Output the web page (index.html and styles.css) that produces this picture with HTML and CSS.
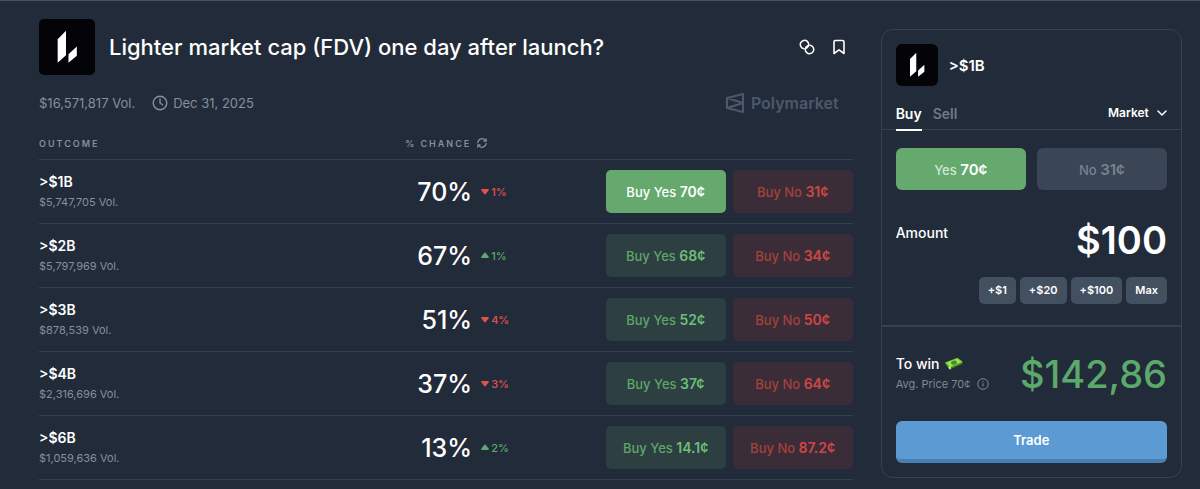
FILE: index.html
```html
<!DOCTYPE html>
<html lang="en">
<head>
  <meta charset="UTF-8">
  <meta name="viewport" content="width=device-width, initial-scale=1.0">
  <title>Lighter market cap (FDV) one day after launch?</title>
  <link rel="stylesheet" href="styles.css">
</head>
<body>
  <!-- shared icons -->
  <svg class="sprite" aria-hidden="true">
    <symbol id="lighter" viewBox="0 0 57 57">
      <path d="M19 20.500 27.500 12v25L19 44.500zM30 36l8.500-8v9.500L30 44.500z" fill="#fff"/>
    </symbol>
    <symbol id="up" viewBox="0 0 8 7">
      <path d="M3.200.9Q4 0 4.800.9L7.600 4.500Q8.300 6 7 6H1Q-.3 6 .4 4.500z" fill="currentColor"/>
    </symbol>
    <symbol id="down" viewBox="0 0 8 7">
      <path d="M3.200 6.100Q4 7 4.800 6.100L7.600 2.500Q8.300 1 7 1H1Q-.3 1 .4 2.500z" fill="currentColor"/>
    </symbol>
  </svg>

  <div class="page">
    <main class="market">
      <header class="market-header">
        <svg class="market-logo" role="img" aria-label="Lighter"><use href="#lighter"/></svg>
        <h1>Lighter market cap (FDV) one day after launch?</h1>
        <button class="icon-button" aria-label="Copy link">
          <svg width="16" height="16" viewBox="0 0 16 16" fill="none" stroke="currentColor" stroke-width="1.500" stroke-linecap="round">
            <path d="M5.060 9.680A4.200 4.200 0 1 1 7.600 9.140"/>
            <path d="M10.940 6.320A4.200 4.200 0 1 1 8.400 6.860"/>
          </svg>
        </button>
        <button class="icon-button" aria-label="Bookmark">
          <svg width="16" height="16" viewBox="0 0 16 16" fill="none" stroke="currentColor" stroke-width="1.600" stroke-linejoin="round">
            <path d="M3 3a1.500 1.500 0 0 1 1.500-1.500h7A1.500 1.500 0 0 1 13 3v11.500l-5-3.700-5 3.700z"/>
          </svg>
        </button>
      </header>

      <div class="market-meta">
        <span>$16,571,817 Vol.</span>
        <svg width="16" height="16" viewBox="0 0 16 16" fill="none" stroke="currentColor" stroke-width="1.400" stroke-linecap="round">
          <circle cx="8" cy="8" r="6.800"/>
          <path d="M8 4v4l2.500 1.800"/>
        </svg>
        <span>Dec 31, 2025</span>
        <span class="brand">
          <svg width="18" height="20" viewBox="0 0 18 20" fill="none" stroke="currentColor" stroke-width="2" stroke-linejoin="round">
            <path d="M1 5 17 1v18L1 15zM1 5l16 5-16 5"/>
          </svg>
          Polymarket
        </span>
      </div>

      <table class="outcomes">
        <thead>
          <tr>
            <th class="col-outcome">Outcome</th>
            <th class="col-chance">
              <span class="chance-title">% Chance
                <button class="refresh" aria-label="Refresh">
                  <svg width="10" height="10" viewBox="0 0 10 10" fill="none" stroke="currentColor" stroke-width="1.200" stroke-linecap="round" stroke-linejoin="round">
                    <path d="M.8 4.700A4.200 4.200 0 0 1 8.600 2.800M9.200.8v2.400H6.800M9.200 5.300A4.200 4.200 0 0 1 1.400 7.200M.8 9.200V6.800h2.400"/>
                  </svg>
                </button>
              </span>
            </th>
            <th></th>
          </tr>
        </thead>
        <tbody>
          <tr>
            <td><div class="name">&gt;$1B</div><div class="volume">$5,747,705 Vol.</div></td>
            <td><div class="chance"><span class="percent">70%</span><span class="change down"><svg><use href="#down"/></svg>1%</span></div></td>
            <td><div class="actions">
              <button class="buy yes selected">Buy Yes <b>70¢</b></button>
              <button class="buy no">Buy No <b>31¢</b></button>
            </div></td>
          </tr>
          <tr>
            <td><div class="name">&gt;$2B</div><div class="volume">$5,797,969 Vol.</div></td>
            <td><div class="chance"><span class="percent">67%</span><span class="change up"><svg><use href="#up"/></svg>1%</span></div></td>
            <td><div class="actions">
              <button class="buy yes">Buy Yes <b>68¢</b></button>
              <button class="buy no">Buy No <b>34¢</b></button>
            </div></td>
          </tr>
          <tr>
            <td><div class="name">&gt;$3B</div><div class="volume">$878,539 Vol.</div></td>
            <td><div class="chance"><span class="percent">51%</span><span class="change down"><svg><use href="#down"/></svg>4%</span></div></td>
            <td><div class="actions">
              <button class="buy yes">Buy Yes <b>52¢</b></button>
              <button class="buy no">Buy No <b>50¢</b></button>
            </div></td>
          </tr>
          <tr>
            <td><div class="name">&gt;$4B</div><div class="volume">$2,316,696 Vol.</div></td>
            <td><div class="chance"><span class="percent">37%</span><span class="change down"><svg><use href="#down"/></svg>3%</span></div></td>
            <td><div class="actions">
              <button class="buy yes">Buy Yes <b>37¢</b></button>
              <button class="buy no">Buy No <b>64¢</b></button>
            </div></td>
          </tr>
          <tr>
            <td><div class="name">&gt;$6B</div><div class="volume">$1,059,636 Vol.</div></td>
            <td><div class="chance"><span class="percent">13%</span><span class="change up"><svg><use href="#up"/></svg>2%</span></div></td>
            <td><div class="actions">
              <button class="buy yes">Buy Yes <b>14.1¢</b></button>
              <button class="buy no">Buy No <b>87.2¢</b></button>
            </div></td>
          </tr>
        </tbody>
      </table>
    </main>

    <aside class="trade-card">
      <div class="trade-header">
        <svg class="trade-logo" role="img" aria-label="Lighter"><use href="#lighter"/></svg>
        <h2>&gt;$1B</h2>
      </div>

      <div class="tabs">
        <button class="tab active">Buy</button>
        <button class="tab">Sell</button>
        <div class="order-type">
          <select aria-label="Order type">
            <option>Market</option>
          </select>
          <svg width="10" height="10" viewBox="0 0 10 10" fill="none" stroke="currentColor" stroke-width="1.500" stroke-linecap="round" stroke-linejoin="round">
            <path d="M1 3l4 4 4-4"/>
          </svg>
        </div>
      </div>

      <div class="sides">
        <button class="side side-yes"><span>Yes</span> <b>70¢</b></button>
        <button class="side side-no"><span>No</span> <b>31¢</b></button>
      </div>

      <div class="amount">
        <label for="amount">Amount</label>
        <input type="text" id="amount" value="$100">
      </div>

      <div class="chips">
        <button>+$1</button>
        <button>+$20</button>
        <button>+$100</button>
        <button>Max</button>
      </div>

      <div class="summary">
        <div class="summary-text">
          <div class="to-win">To win
            <svg width="18" height="14" viewBox="0 0 18 14">
              <path d="M0 6.500 13 2l5 4.500L4.500 12.500z" fill="#3d8b22"/>
              <path d="M0 5.500 12.500.8 18 5 4.500 10.800z" fill="#79c832"/>
              <path d="M2 5.600 12.200 1.900 16 4.900 5 9.500z" fill="#a4e05a"/>
              <ellipse cx="9" cy="5.700" rx="3" ry="2" fill="#3f8f22" transform="rotate(-15 9 5.700)"/>
              <path d="M3.200 10.200 5.800 9v3L4.500 12.500z" fill="#c6e89a"/>
            </svg>
          </div>
          <div class="avg-price">Avg. Price 70¢
            <svg width="12" height="12" viewBox="0 0 12 12" fill="none" stroke="currentColor">
              <circle cx="6" cy="6" r="5.300"/>
              <path d="M6 5.300v3.200M6 3v1.200"/>
            </svg>
          </div>
        </div>
        <output class="payout">$142,86</output>
      </div>

      <button class="trade-button">Trade</button>
    </aside>
  </div>
</body>
</html>
```
FILE: styles.css
```css
* {
  box-sizing: border-box;
}
body {
  margin: 0;
  background-color: #222b39;
  border-top: 1px solid #465262;
  color: #fff;
  font-family: Inter, "Liberation Sans", sans-serif;
}
button, select, input {
  font-family: inherit;
  color: inherit;
  background: none;
  border: none;
  margin: 0;
  padding: 0;
}
button, select {
  cursor: pointer;
}
h1, h2 {
  margin: 0;
  font-weight: 500;
}
.sprite {
  display: none;
}
.page {
  display: grid;
  grid-template-columns: minmax(0, 27fr) minmax(0, 10fr);
  align-items: start;
  gap: 28px;
  padding: 18px 18px 8px 39px;
}

/* market */
.market-header {
  display: flex;
  align-items: center;
  gap: 16px;
  padding-right: 6px;
}
.market-logo {
  flex: none;
  width: 56px;
  height: 56px;
  background-color: #040408;
  border-radius: 5px;
}
h1 {
  flex: 1;
  margin-left: -2px;
  font-size: 22px;
  line-height: 28px;
}
.icon-button {
  display: flex;
}
.market-meta {
  display: flex;
  align-items: center;
  gap: 5px;
  height: 24px;
  margin-top: 16px;
  color: #858f9f;
  font-size: 13px;
}
.market-meta > svg {
  margin-left: 12px;
}
.brand {
  display: flex;
  align-items: center;
  gap: 7px;
  margin-left: auto;
  padding-right: 14px;
  color: #4c596b;
  font-size: 16px;
  font-weight: 600;
}
.outcomes {
  width: 100%;
  margin-top: 12px;
  border-collapse: separate;
  border-spacing: 0;
}
.outcomes th {
  height: 33px;
  padding: 0;
  border-bottom: 1px solid #344050;
  color: #858f9f;
  font-size: 9px;
  font-weight: 600;
  letter-spacing: 2px;
  text-align: left;
  text-transform: uppercase;
}
.col-outcome {
  width: 45%;
}
.chance-title {
  display: flex;
  align-items: center;
  gap: 6px;
}
.refresh {
  display: flex;
}
.outcomes td {
  padding: 10px 0;
  border-bottom: 1px solid #344050;
}
.name {
  font-size: 14px;
  font-weight: 600;
  line-height: 20px;
}
.volume {
  color: #858f9f;
  font-size: 11px;
  line-height: 20px;
}
.chance {
  display: flex;
  align-items: center;
  gap: 9px;
}
.percent {
  width: 67px;
  font-size: 25px;
  font-weight: 500;
  text-align: right;
}
.change {
  display: flex;
  align-items: center;
  gap: 2px;
  font-size: 11px;
  font-weight: 500;
}
.change svg {
  width: 8px;
  height: 7px;
}
.up {
  color: #5ca96c;
}
.down {
  color: #e0524f;
}
.actions {
  display: flex;
  justify-content: flex-end;
  gap: 7px;
}
.buy {
  width: 120px;
  height: 43px;
  border-radius: 5px;
  font-size: 13px;
  font-weight: 500;
  white-space: nowrap;
}
.buy b {
  font-size: 14px;
  font-weight: 600;
}
.yes {
  background-color: #2d3f41;
  color: #5ea46c;
}
.yes b {
  color: #6cbd78;
}
.no {
  background-color: #3b2d38;
  color: #a5403f;
}
.no b {
  color: #cf4745;
}
.selected, .selected b {
  background-color: #65a96f;
  color: #fff;
}

/* trade card */
.trade-card {
  margin-top: 10px;
  padding: 14px;
  border: 1px solid #364252;
  border-radius: 12px;
}
.trade-header {
  display: flex;
  align-items: center;
  gap: 11px;
}
.trade-logo {
  width: 42px;
  height: 42px;
  background-color: #040408;
  border-radius: 6px;
}
h2 {
  font-size: 15px;
  font-weight: 600;
}
.tabs {
  display: flex;
  gap: 11px;
  height: 32px;
  margin: 12px -14px 18px;
  padding: 0 14px;
  border-bottom: 1px solid #364252;
}
.tab {
  height: 33px;
  border-bottom: 2px solid transparent;
  color: #6f7a89;
  font-size: 14px;
  font-weight: 600;
}
.tab.active {
  border-color: #fff;
  color: #fff;
}
.order-type {
  display: flex;
  align-items: center;
  gap: 8px;
  margin-left: auto;
  padding-bottom: 2px;
}
.order-type select {
  appearance: none;
  font-size: 12px;
  font-weight: 600;
}
.sides {
  display: flex;
  gap: 11px;
}
.side {
  flex: 1;
  height: 42px;
  border-radius: 6px;
  font-size: 13px;
  font-weight: 500;
}
.side b {
  font-size: 15px;
  font-weight: 600;
}
.side-yes {
  background-color: #65a96f;
}
.side-yes span {
  color: #d0e6d3;
}
.side-no {
  background-color: #3a4555;
  color: #78828f;
}
.amount {
  display: flex;
  align-items: flex-start;
  justify-content: space-between;
  margin-top: 26px;
}
.amount label {
  padding-top: 7px;
  font-size: 14px;
  font-weight: 500;
  line-height: 20px;
}
.amount input {
  width: 60%;
  height: 48px;
  font-size: 38px;
  font-weight: 600;
  text-align: right;
}
.chips {
  display: flex;
  justify-content: flex-end;
  gap: 4px;
  margin-top: 13px;
}
.chips button {
  height: 27px;
  padding: 0 9px 2px;
  border-radius: 5px;
  background-color: #435060;
  font-size: 11px;
  font-weight: 600;
}
.summary {
  display: flex;
  align-items: center;
  justify-content: space-between;
  margin: 21px -14px 0;
  padding: 23px 14px;
  border-top: 2px solid #364252;
}
.to-win, .avg-price {
  display: flex;
  align-items: center;
  gap: 6px;
  line-height: 20px;
  white-space: nowrap;
}
.to-win {
  font-size: 14px;
  font-weight: 500;
}
.avg-price {
  color: #7f8894;
  font-size: 11px;
}
.payout {
  color: #5ca96c;
  font-size: 38px;
  font-weight: 500;
  line-height: 48px;
}
.trade-button {
  display: block;
  width: 100%;
  height: 42px;
  border-bottom: 4px solid #487fb2;
  border-radius: 6px;
  background-color: #5c9ad3;
  font-size: 13px;
  font-weight: 600;
}
```
